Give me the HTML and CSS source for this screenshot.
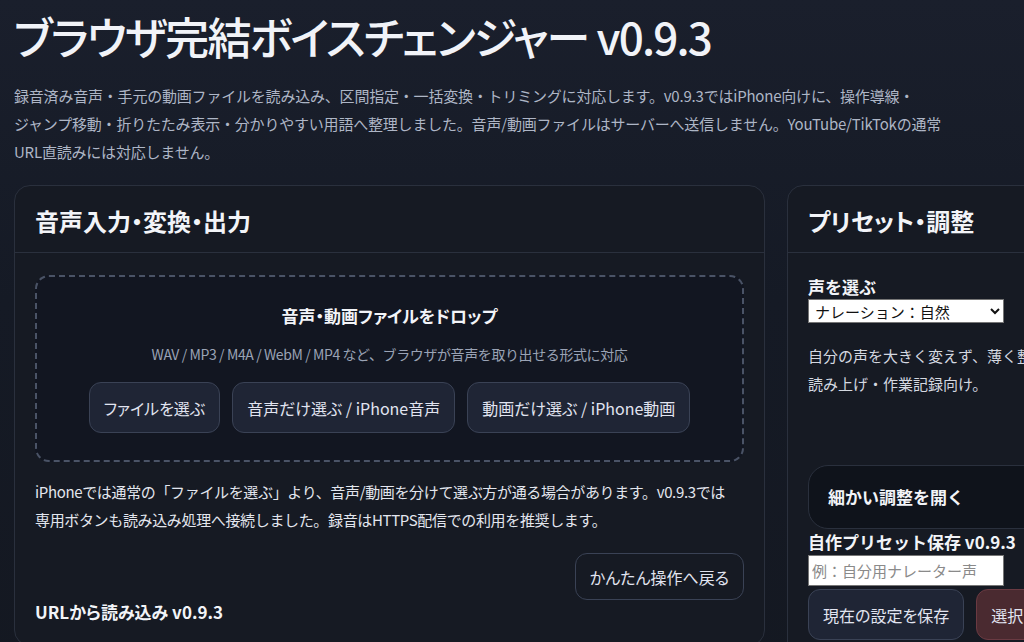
FILE: index.html
```html
<!DOCTYPE html>
<html lang="ja">
<head>
  <meta charset="UTF-8" />
  <meta name="viewport" content="width=device-width, initial-scale=1.0" />
  <title>ブラウザ完結ボイスチェンジャー v0.9.3</title>
  <link rel="stylesheet" href="styles.css">
</head>
<body>
  <header class="top">
    <h1>ブラウザ完結ボイスチェンジャー v0.9.3</h1>
    <p class="lead">録音済み音声・手元の動画ファイルを読み込み、区間指定・一括変換・トリミングに対応します。v0.9.3ではiPhone向けに、操作導線・<br>ジャンプ移動・折りたたみ表示・分かりやすい用語へ整理しました。音声/動画ファイルはサーバーへ送信しません。YouTube/TikTokの通常<br>URL直読みには対応しません。</p>
  </header>

  <main class="layout">
    <section class="card main-card">
      <div class="card-head"><h2>音声入力・変換・出力</h2></div>
      <div class="card-body">
        <div class="dropzone" id="dropzone">
          <div class="drop-title">音声・動画ファイルをドロップ</div>
          <div class="drop-sub">WAV / MP3 / M4A / WebM / MP4 など、ブラウザが音声を取り出せる形式に対応</div>
          <div class="drop-btns">
            <button class="btn">ファイルを選ぶ</button>
            <button class="btn">音声だけ選ぶ / iPhone音声</button>
            <button class="btn">動画だけ選ぶ / iPhone動画</button>
          </div>
        </div>
        <p class="note">iPhoneでは通常の「ファイルを選ぶ」より、音声/動画を分けて選ぶ方が通る場合があります。v0.9.3では<br>専用ボタンも読み込み処理へ接続しました。録音はHTTPS配信での利用を推奨します。</p>
        <div class="row-end"><button class="btn btn-ghost">かんたん操作へ戻る</button></div>
        <h3 class="sub-head">URLから読み込み v0.9.3</h3>
      </div>
    </section>

    <section class="card side-card">
      <div class="card-head"><h2>プリセット・調整</h2></div>
      <div class="card-body">
        <label class="field-label" for="voice">声を選ぶ</label>
        <select id="voice">
          <option>ナレーション：自然</option>
        </select>
        <p class="voice-desc">自分の声を大きく変えず、薄く整える設定です。<br>読み上げ・作業記録向け。</p>
        <details class="fine">
          <summary>細かい調整を開く</summary>
        </details>
        <div class="field-label">自作プリセット保存 v0.9.3</div>
        <input type="text" placeholder="例：自分用ナレーター声">
        <div class="preset-btns">
          <button class="btn">現在の設定を保存</button>
          <button class="btn btn-danger">選択したプリセットを削除</button>
        </div>
      </div>
    </section>
  </main>
</body>
</html>
```

FILE: styles.css
```css
html { background: #141821; }
body { margin: 0; padding: 0 14px 40px; min-height: 642px; background: linear-gradient(180deg, #1a1f2c 0%, #151a25 300px, #141821 100%); color: #e6e9f0; font-family: "Noto Sans CJK JP", "Noto Sans", sans-serif; font-feature-settings: "palt"; overflow: hidden; }

.top { padding-top: 6px; }
.top h1 { margin: 0; font-size: 44px; font-weight: 500; line-height: 60px; color: #f1f3f8; letter-spacing: -1.8px; }
.lead { margin: 16px 0 19px; font-size: 15px; line-height: 28px; color: #aeb6c6; font-feature-settings: normal; letter-spacing: -0.2px; white-space: nowrap; }

.layout { display: grid; grid-template-columns: 751px 420px; gap: 22px; align-items: start; }
.card { background: #161a23; border: 1px solid #2a303d; border-radius: 16px; }
.card-head { padding: 16px 20px 12px; border-bottom: 1px solid #2a303d; }
.card-head h2 { margin: 0; font-size: 24px; font-weight: 700; line-height: 38px; color: #f2f4f8; }
.card-body { padding: 22px 20px 20px; }

.dropzone { border: 2px dashed #4a5366; border-radius: 14px; background: #121621; padding: 26px 20px 27px; text-align: center; }
.drop-title { font-size: 17px; font-weight: 700; line-height: 26px; color: #f2f4f8; }
.drop-sub { margin-top: 14px; font-size: 14px; line-height: 22px; color: #9aa3b5; font-feature-settings: normal; letter-spacing: -0.4px; }
.drop-btns { display: flex; justify-content: center; gap: 12px; margin-top: 17px; }

.btn { font-family: inherit; font-feature-settings: "palt"; font-size: 16px; color: #e1e4f0; background: #1f2535; border: 1px solid #3a4255; border-radius: 12px; padding: 0 14px; height: 51px; cursor: pointer; }
.btn-ghost { background: transparent; height: 47px; padding: 0 14px; }
.btn-danger { background: #4a2a30; border-color: #6a3a42; }

.note { margin: 16px 0 0; font-size: 15px; line-height: 28px; color: #e3e6ee; font-feature-settings: normal; letter-spacing: -0.35px; white-space: nowrap; }
.row-end { display: flex; justify-content: flex-end; margin-top: 19px; }
.sub-head { margin: -1px 0 0; font-size: 17px; font-weight: 700; line-height: 26px; color: #f2f4f8; }

.side-card .card-body { padding-top: 22px; font-feature-settings: normal; }
.field-label { display: block; font-size: 17px; font-weight: 700; line-height: 24px; color: #f2f4f8; }
select { display: block; width: 196px; height: 24px; font-family: inherit; font-size: 15px; color: #111; background: #fff; border: 1px solid #767676; border-radius: 0; padding: 0 2px; }
.voice-desc { margin: 19px 0 0; font-size: 15px; line-height: 28px; color: #d4d8e0; white-space: nowrap; }
.fine { margin-top: 67px; background: #0f131b; border: 1px solid #2a303d; border-radius: 20px; }
.fine summary { list-style: none; padding: 18px 19px; font-size: 17px; font-weight: 700; line-height: 26px; color: #f2f4f8; cursor: pointer; }
.fine summary::-webkit-details-marker { display: none; }
.fine + .field-label { margin-top: 1px; }
input[type="text"] { display: block; width: 196px; height: 31px; margin-top: 1px; font-family: inherit; font-size: 15px; background: #fff; color: #111; border: 1px solid #767676; padding: 0 3px; box-sizing: border-box; }
input::placeholder { color: #8a8a8a; }
.preset-btns { display: flex; gap: 12px; margin-top: 3px; }
.preset-btns .btn { height: 51px; white-space: nowrap; }
```
